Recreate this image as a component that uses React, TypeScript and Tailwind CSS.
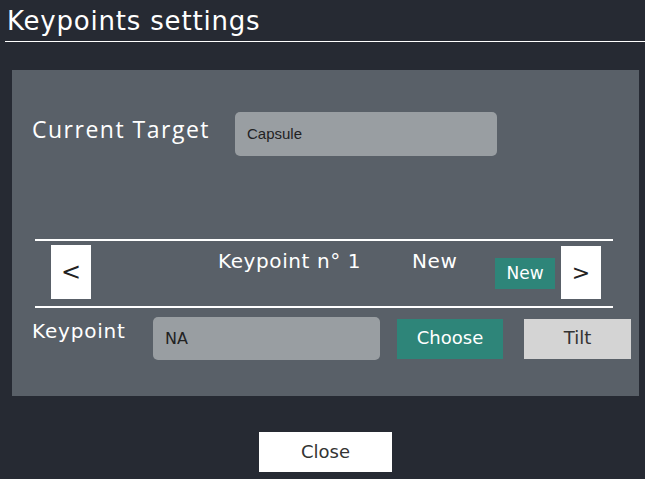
import React from "react";

export default function App() {
  const tech = { fontFamily: '"DejaVu Sans", sans-serif' } as React.CSSProperties;
  return (
    <div className="w-[645px] h-[479px] bg-[#262a33] flex flex-col overflow-hidden" style={tech}>
      <div className="pl-[7px] pt-[4px] h-[41px] text-white text-[26px] leading-[34px] tracking-[0.8px]">
        Keypoints settings
      </div>
      <div className="h-px bg-white ml-[5px]" />
      <div className="ml-[12px] mt-[28px] w-[627px] h-[326px] bg-[#596068] flex flex-col">
        <div className="flex items-start mt-[42px]">
          <div className="ml-[20px] w-[203px] pt-[2px] text-white text-[23px] leading-[30px] tracking-[1.5px]" style={{ fontFamily: '"Open Sans", sans-serif' }}>
            Current Target
          </div>
          <div className="w-[262px] h-[44px] rounded-[5px] bg-[#999ea2] flex items-center pl-[12px] text-[15px] text-[#222]" style={{ fontFamily: '"Liberation Sans", sans-serif' }}>
            Capsule
          </div>
        </div>
        <div className="ml-[23px] w-[578px] h-[2px] bg-white mt-[83px]" />
        <div className="flex items-start mt-[4px] h-[55px] relative">
          <div className="ml-[39px] w-[40px] h-[54px] bg-white flex items-center justify-center text-[24px] text-[#222]">&lt;</div>
          <div className="ml-[127px] mt-[3px] text-white text-[20px] leading-[26px] tracking-[0.6px] w-[194px]">Keypoint n° 1</div>
          <div className="mt-[3px] text-white text-[20px] leading-[26px] tracking-[0.6px] w-[83px]">New</div>
          <div className="mt-[13px] w-[60px] h-[31px] bg-[#2e8579] text-white text-[17px] flex items-center justify-center">New</div>
          <div className="ml-[6px] mt-[1px] w-[40px] h-[53px] bg-white flex items-center justify-center text-[22px] text-[#222]">&gt;</div>
        </div>
        <div className="ml-[23px] w-[578px] h-[2px] bg-white mt-[6px]" />
        <div className="flex items-start mt-[9px]">
          <div className="ml-[20px] w-[121px] mt-[1px] text-white text-[20px] leading-[26px] tracking-[0.8px]">Keypoint</div>
          <div className="w-[227px] h-[43px] rounded-[5px] bg-[#999ea2] flex items-center pl-[12px] text-[16px] text-[#222]">NA</div>
          <div className="ml-[17px] mt-[2px] w-[106px] h-[40px] pb-[3px] bg-[#2e8579] text-white text-[18px] flex items-center justify-center">Choose</div>
          <div className="ml-[21px] mt-[2px] w-[107px] h-[40px] pb-[3px] bg-[#d4d4d4] text-[#333] text-[18px] flex items-center justify-center">Tilt</div>
        </div>
      </div>
      <div className="ml-[259px] mt-[36px] w-[133px] h-[40px] pb-[2px] bg-white text-[#333] text-[18px] flex items-center justify-center">Close</div>
    </div>
  );
}
